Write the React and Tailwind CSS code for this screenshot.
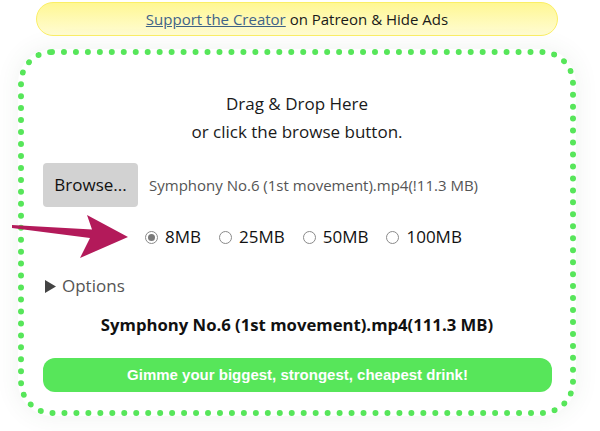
import React from "react";

function Radio({ checked, label }) {
  return (
    <label className="flex items-center gap-[7px]">
      <span className="w-[13px] h-[13px] rounded-full border border-[#8a8a8a] bg-white flex items-center justify-center">
        {checked && <span className="w-[7px] h-[7px] rounded-full bg-[#7a7a7a]" />}
      </span>
      <span>{label}</span>
    </label>
  );
}

export default function App() {
  return (
    <div
      className="relative w-[600px] h-[431px] bg-white overflow-hidden text-[#1a1a1a]"
      style={{ fontFamily: '"Open Sans", "Noto Sans", sans-serif' }}
    >
      <div className="pt-[2px] pl-[36px]">
        <div className="w-[522px] h-[34px] rounded-full border border-[#fbef66] bg-gradient-to-b from-[#fff792] to-[#fffcd2] flex items-center justify-center text-[15px]">
          <a className="underline text-[#3f6387]">Support the Creator</a>
          <span>&nbsp;on Patreon &amp; Hide Ads</span>
        </div>
      </div>

      <div className="mt-[13px] ml-[18px] w-[558px] h-[367px] rounded-[34px] border-[6px] border-dotted border-[#57e65a] shadow-[0_0_24px_rgba(60,90,60,0.08)] px-[19px] pt-[35px] flex flex-col">
        <div className="text-center text-[17px] leading-[28px]">
          <div>Drag &amp; Drop Here</div>
          <div>or click the browse button.</div>
        </div>

        <div className="mt-[17px] flex items-center gap-[11px]">
          <button className="w-[95px] h-[44px] rounded-[4px] bg-[#d2d2d2] text-[17px] text-[#111]">
            Browse...
          </button>
          <span className="text-[15px] text-[#555]">Symphony No.6 (1st movement).mp4(!11.3 MB)</span>
        </div>

        <div className="mt-[18px] h-[24px] flex items-center pl-[102px] gap-[18px] text-[17px] text-[#111]">
          <Radio checked label="8MB" />
          <Radio label="25MB" />
          <Radio label="50MB" />
          <Radio label="100MB" />
        </div>

        <div className="mt-[24px] h-[26px] flex items-center text-[17px] text-[#555] pl-[2px]">
          <svg width="11" height="13" viewBox="0 0 11 13" className="mr-[6px]">
            <polygon points="0,0 11,6.5 0,13" fill="#444" />
          </svg>
          <span>Options</span>
        </div>

        <div className="mt-[14px] h-[24px] flex items-center justify-center text-[16.7px] font-bold text-[#111]">
          Symphony No.6 (1st movement).mp4(111.3 MB)
        </div>

        <button
          className="mt-[21px] h-[34px] w-[509px] rounded-[12px] bg-[#57e65a] text-white text-[15px] font-bold"
          style={{ fontFamily: '"Liberation Sans", Arial, sans-serif' }}
        >
          Gimme your biggest, strongest, cheapest drink!
        </button>
      </div>

      <svg className="absolute left-0 top-0" width="600" height="431" viewBox="0 0 600 431">
        <polygon
          points="12,225 92,229.5 87,215 128,237 80,258 90,238 12,228"
          fill="#b31a5a"
        />
      </svg>
    </div>
  );
}
